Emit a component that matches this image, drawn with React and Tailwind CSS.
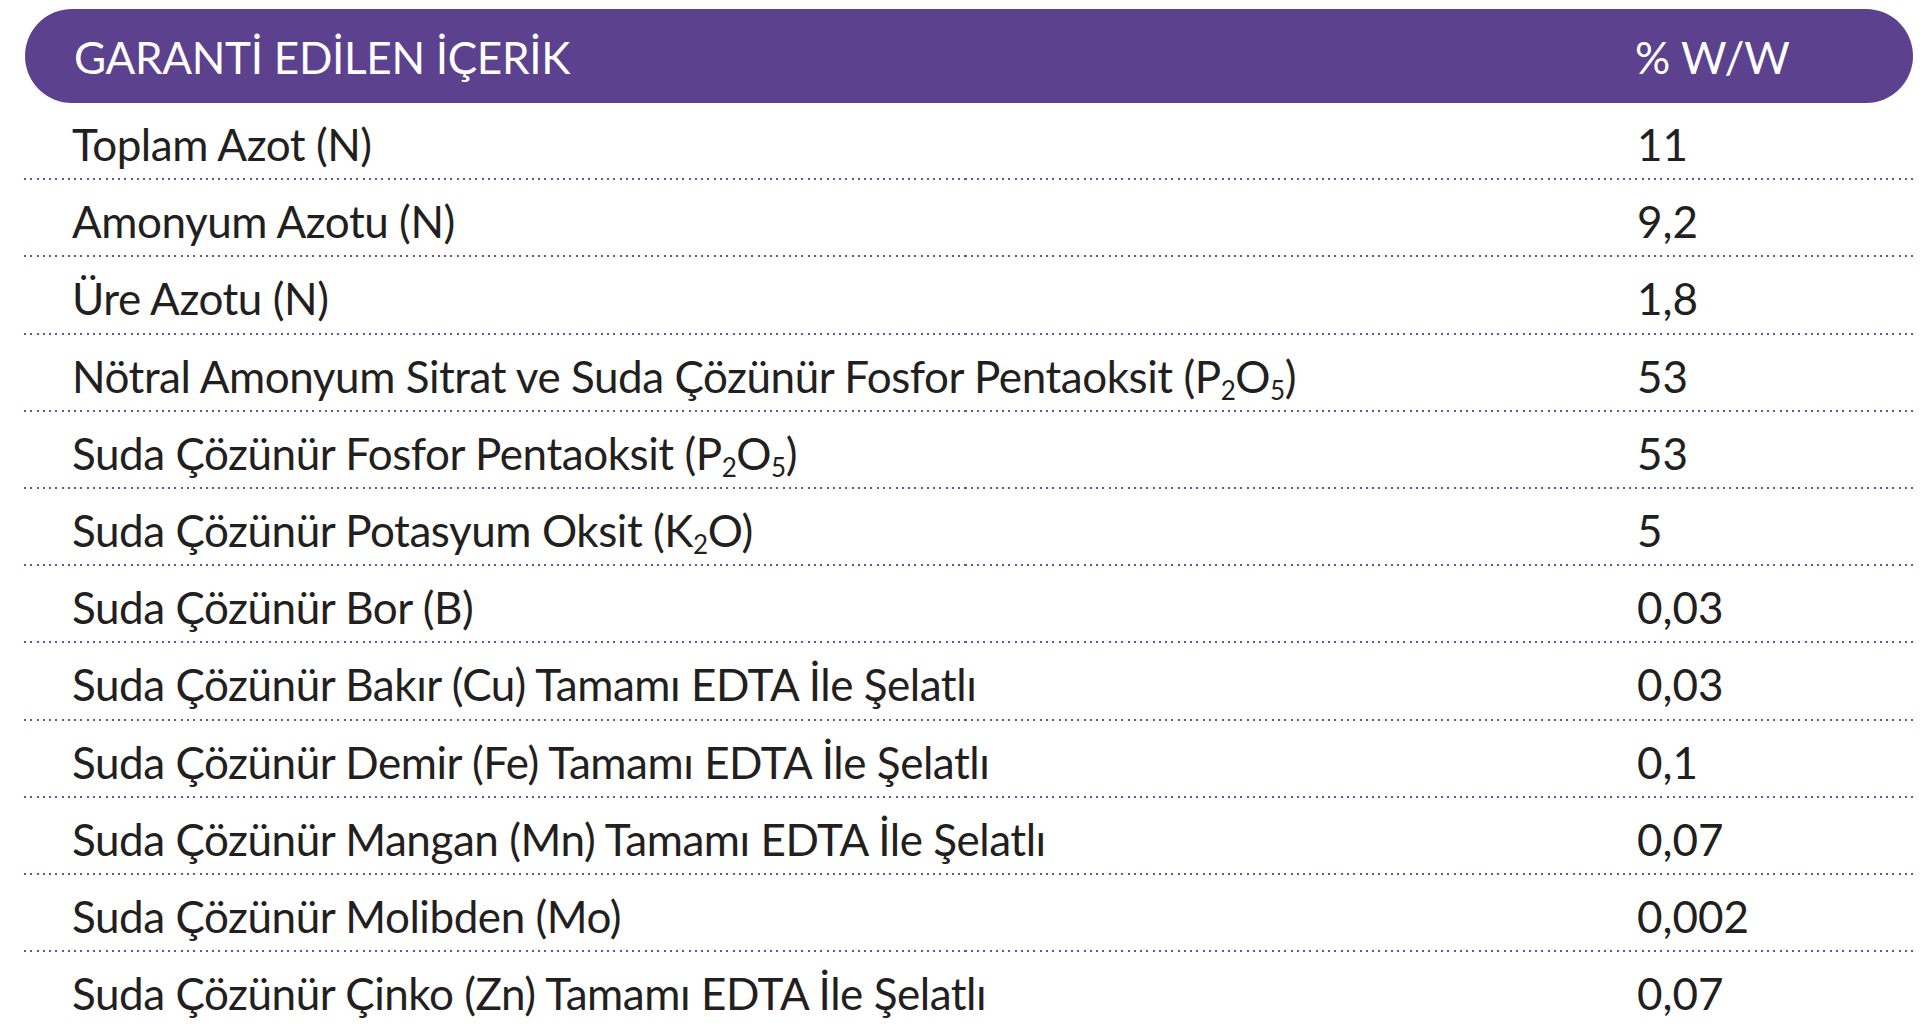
const Sub = ({ children }) => (
  <span className="text-[26px] leading-none align-[-7px]">{children}</span>
)

const rows = [
  { label: 'Toplam Azot (N)', value: '11' },
  { label: 'Amonyum Azotu (N)', value: '9,2' },
  { label: 'Üre Azotu (N)', value: '1,8' },
  {
    label: (
      <>
        Nötral Amonyum Sitrat ve Suda Çözünür Fosfor Pentaoksit (P<Sub>2</Sub>O<Sub>5</Sub>)
      </>
    ),
    value: '53',
  },
  {
    label: (
      <>
        Suda Çözünür Fosfor Pentaoksit (P<Sub>2</Sub>O<Sub>5</Sub>)
      </>
    ),
    value: '53',
  },
  {
    label: (
      <>
        Suda Çözünür Potasyum Oksit (K<Sub>2</Sub>O)
      </>
    ),
    value: '5',
  },
  { label: 'Suda Çözünür Bor (B)', value: '0,03' },
  { label: 'Suda Çözünür Bakır (Cu) Tamamı EDTA İle Şelatlı', value: '0,03' },
  { label: 'Suda Çözünür Demir (Fe) Tamamı EDTA İle Şelatlı', value: '0,1' },
  { label: 'Suda Çözünür Mangan (Mn) Tamamı EDTA İle Şelatlı', value: '0,07' },
  { label: 'Suda Çözünür Molibden (Mo)', value: '0,002' },
  { label: 'Suda Çözünür Çinko (Zn) Tamamı EDTA İle Şelatlı', value: '0,07' },
]

export default function App() {
  return (
    <div className="min-h-screen bg-white pt-[9px] pl-[24px] pr-[10px] font-['Lato','Liberation_Sans',sans-serif] text-[#231f20]">
      <div className="w-[1891px]">
        <div className="ml-[1px] mr-[2px] flex h-[94px] items-start rounded-full bg-[#5c418f] pt-[22px] text-white">
          <div className="flex-1 pl-[49px] text-[44px] leading-[52.8px] tracking-[-0.3px]">GARANTİ EDİLEN İÇERİK</div>
          <div className="w-[278px] text-[44px] leading-[52.8px]">% W/W</div>
        </div>
        {rows.map((row, i) => (
          <div key={i} className="flex h-[77.2px] flex-col">
            <div className="flex flex-1 pt-[15px] text-[44px] leading-[52.8px]">
              <div className="flex-1 pl-[48px] whitespace-nowrap tracking-[-0.45px]">{row.label}</div>
              <div className="w-[278px]">{row.value}</div>
            </div>
            {i < rows.length - 1 && (
              <div className="h-[2px] bg-[repeating-linear-gradient(to_right,#6553a6_0_2px,transparent_2px_6.27px)]" />
            )}
          </div>
        ))}
      </div>
    </div>
  )
}
